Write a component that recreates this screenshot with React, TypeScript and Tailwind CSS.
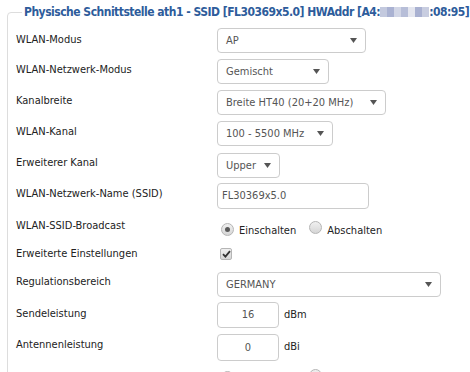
import React from "react";

function Arrow() {
  return (
    <svg width="7" height="5" viewBox="0 0 7 5" className="shrink-0">
      <path d="M0 0 L7 0 L3.5 5 Z" fill="#555" />
    </svg>
  );
}

function Select({ value, width }: { value: string; width: string }) {
  return (
    <div
      className={`${width} h-[25px] flex items-center justify-between pl-[8px] pr-[8px] border border-[#ccc] rounded-[4px] bg-white text-[#555]`}
    >
      <span>{value}</span>
      <Arrow />
    </div>
  );
}

function Radio({ checked }: { checked?: boolean }) {
  return (
    <span className="inline-flex items-center justify-center w-[13px] h-[13px] rounded-full border border-[#b5b5b5] bg-gradient-to-b from-[#f0f0f0] to-[#d6d6d6] shrink-0">
      {checked && <span className="w-[5px] h-[5px] rounded-full bg-[#5a5a5a]" />}
    </span>
  );
}

function RadioPair({ pt }: { pt: string }) {
  return (
    <div className={`flex items-start ${pt} pl-[4px] text-[#222]`}>
      <span className="pt-[1px]">
        <Radio checked />
      </span>
      <span className="ml-[5px] pt-[3px]">Einschalten</span>
      <span className="ml-[13px] pt-[1px]">
        <Radio />
      </span>
      <span className="ml-[5px] pt-[3px]">Abschalten</span>
    </div>
  );
}

function Row({
  label,
  h,
  pt,
  children,
}: {
  label: string;
  h: string;
  pt: string;
  children: React.ReactNode;
}) {
  return (
    <div className={`flex items-start ${h}`}>
      <div className={`w-[201px] shrink-0 ${pt} text-[#222]`}>{label}</div>
      {children}
    </div>
  );
}

export default function App() {
  const mac = ["#c3c9de", "#aab2d2", "#d2d6e6", "#b7bed8", "#e4e6ef", "#a9b1d1", "#c8cde0"];

  return (
    <div className="w-[470px] h-[372px] overflow-hidden bg-white font-['DejaVu_Sans_Condensed','DejaVu_Sans',sans-serif] text-[11px] leading-[16px]">
      <fieldset className="ml-[7px] mt-[4px] w-[520px] border border-[#ddd] rounded-[4px] pl-[8px] pt-[7px]">
        <legend className="ml-[6px] px-[2px] text-[12px] tracking-[-0.5px] leading-[17px] font-bold text-[#2d5c9b] whitespace-nowrap">
          Physische Schnittstelle ath1 - SSID [FL30369x5.0] HWAddr [A4:
          <span className="inline-flex align-middle h-[10px] mb-[2px]">
            {mac.map((c, i) => (
              <span key={i} className="w-[7px] h-[10px]" style={{ backgroundColor: c }} />
            ))}
          </span>
          :08:95]
        </legend>

        <Row label="WLAN-Modus" h="h-[31px]" pt="pt-[4px]">
          <Select value="AP" width="w-[149px]" />
        </Row>
        <Row label="WLAN-Netzwerk-Modus" h="h-[31px]" pt="pt-[3px]">
          <Select value="Gemischt" width="w-[112px]" />
        </Row>
        <Row label="Kanalbreite" h="h-[31px]" pt="pt-[3px]">
          <Select value="Breite HT40 (20+20 MHz)" width="w-[169px]" />
        </Row>
        <Row label="WLAN-Kanal" h="h-[32px]" pt="pt-[3px]">
          <Select value="100 - 5500 MHz" width="w-[116px]" />
        </Row>
        <Row label="Erweiterer Kanal" h="h-[30px]" pt="pt-[2px]">
          <Select value="Upper" width="w-[63px]" />
        </Row>
        <Row label="WLAN-Netzwerk-Name (SSID)" h="h-[31px]" pt="pt-[3px]">
          <div className="w-[152px] h-[26px] flex items-center pl-[4px] border border-[#ccc] rounded-[4px] text-[#555]">
            FL30369x5.0
          </div>
        </Row>
        <Row label="WLAN-SSID-Broadcast" h="h-[31px]" pt="pt-[4px]">
          <RadioPair pt="pt-[6px]" />
        </Row>
        <Row label="Erweiterte Einstellungen" h="h-[27px]" pt="pt-[1px]">
          <div className="pt-[3px] pl-[3px]">
            <span className="flex items-center justify-center w-[12px] h-[12px] rounded-[2px] border border-[#b5b5b5] bg-gradient-to-b from-[#f0f0f0] to-[#d6d6d6]">
              <svg width="9" height="8" viewBox="0 0 9 8">
                <path d="M1 4.2 L3.4 6.6 L8 1.2" stroke="#333" strokeWidth="1.8" fill="none" />
              </svg>
            </span>
          </div>
        </Row>
        <Row label="Regulationsbereich" h="h-[30px]" pt="pt-[2px]">
          <Select value="GERMANY" width="w-[224px]" />
        </Row>
        <Row label="Sendeleistung" h="h-[32px]" pt="pt-[4px]">
          <div className="w-[62px] h-[26px] flex items-center justify-center border border-[#ccc] rounded-[4px] text-[#555]">
            16
          </div>
          <span className="ml-[5px] pt-[5px] text-[#222]">dBm</span>
        </Row>
        <Row label="Antennenleistung" h="h-[31px]" pt="pt-[3px]">
          <div className="w-[62px] h-[27px] flex items-center justify-center border border-[#ccc] rounded-[4px] text-[#555]">
            0
          </div>
          <span className="ml-[5px] pt-[5px] text-[#222]">dBi</span>
        </Row>
        <Row label="Antennendiversität" h="h-[31px]" pt="pt-[12px]">
          <RadioPair pt="pt-[3px]" />
        </Row>
      </fieldset>
    </div>
  );
}
